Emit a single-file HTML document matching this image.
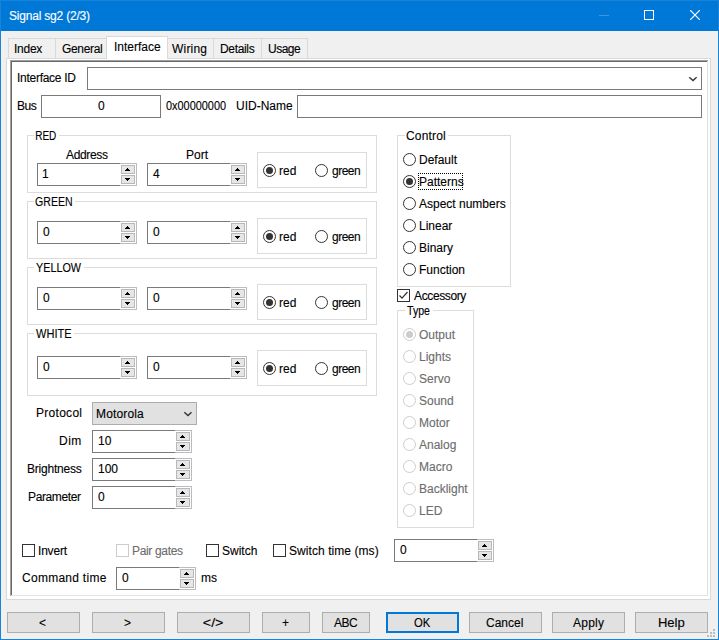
<!DOCTYPE html>
<html><head><meta charset="utf-8"><style>
html,body{margin:0;padding:0}
body{width:719px;height:640px;position:relative;overflow:hidden;background:#f0f0f0;font-family:'Liberation Sans', sans-serif;font-size:12px}
.a{position:absolute;box-sizing:border-box}
.t{line-height:14px;white-space:pre;-webkit-text-stroke:0.12px currentColor}
.btn{text-align:center;color:#000;white-space:pre}
</style></head><body>
<div class="a" style="left:0px;top:0px;width:719px;height:31px;background:#0078d7;"></div>
<div class="a" style="left:0px;top:0px;width:1px;height:640px;background:#1883d7;"></div>
<div class="a" style="left:718px;top:0px;width:1px;height:640px;background:#1883d7;"></div>
<div class="a" style="left:0px;top:639px;width:719px;height:1px;background:#1883d7;"></div>
<div class="a" style="left:0px;top:0px;width:719px;height:1px;background:#1883d7;"></div>
<div class="a" style="left:599px;top:15px;width:10px;height:1px;background:#3f95de;"></div>
<svg class="a" style="left:644px;top:10px" width="10" height="10"><rect x="0.5" y="0.5" width="9" height="9" fill="none" stroke="#fff" stroke-width="1"/></svg>
<svg class="a" style="left:690px;top:10px" width="10" height="10"><path d="M0 0 L10 10 M10 0 L0 10" stroke="#fff" stroke-width="1.2" fill="none"/></svg>
<div class="a" style="left:6px;top:58px;width:705px;height:542px;background:#fff;box-shadow:inset 0 0 0 1px #d9d9d9;"></div>
<div class="a" style="left:8px;top:38px;width:48px;height:21px;background:#f0f0f0;box-shadow:inset 0 0 0 1px #d9d9d9;"></div>
<div class="a" style="left:55px;top:38px;width:52px;height:21px;background:#f0f0f0;box-shadow:inset 0 0 0 1px #d9d9d9;"></div>
<div class="a" style="left:167px;top:38px;width:47px;height:21px;background:#f0f0f0;box-shadow:inset 0 0 0 1px #d9d9d9;"></div>
<div class="a" style="left:213px;top:38px;width:49px;height:21px;background:#f0f0f0;box-shadow:inset 0 0 0 1px #d9d9d9;"></div>
<div class="a" style="left:261px;top:38px;width:47px;height:21px;background:#f0f0f0;box-shadow:inset 0 0 0 1px #d9d9d9;"></div>
<div class="a" style="left:106px;top:36px;width:62px;height:23px;background:#fff;box-shadow:inset 0 0 0 1px #d9d9d9;"></div>
<div class="a" style="left:107px;top:58px;width:60px;height:1px;background:#fff;"></div>
<div class="a" style="left:10px;top:60px;width:699px;height:537px;background:#fff;"></div>
<div class="a" style="left:10px;top:60px;width:698px;height:1px;background:#a0a0a0;"></div>
<div class="a" style="left:10px;top:60px;width:1px;height:536px;background:#a0a0a0;"></div>
<div class="a" style="left:11px;top:61px;width:696px;height:1px;background:#696969;"></div>
<div class="a" style="left:11px;top:61px;width:1px;height:534px;background:#696969;"></div>
<div class="a" style="left:11px;top:595px;width:697px;height:1px;background:#e3e3e3;"></div>
<div class="a" style="left:707px;top:61px;width:1px;height:535px;background:#e3e3e3;"></div>
<div class="a" style="left:10px;top:596px;width:699px;height:1px;background:#ffffff;"></div>
<div class="a" style="left:708px;top:60px;width:1px;height:537px;background:#ffffff;"></div>
<div class="a" style="left:87px;top:67px;width:615px;height:23px;background:#fff;box-shadow:inset 0 0 0 1px #7a7a7a;"></div>
<svg class="a" style="left:686px;top:74px" width="14" height="10"><path d="M3.25 3.2 L7 6.5 L10.6 3.2" stroke="#333" stroke-width="1.35" fill="none"/></svg>
<div class="a" style="left:41px;top:95px;width:120px;height:23px;background:#fff;box-shadow:inset 0 0 0 1px #7a7a7a;"></div>
<div class="a" style="left:297px;top:95px;width:405px;height:23px;background:#fff;box-shadow:inset 0 0 0 1px #7a7a7a;"></div>
<div class="a" style="left:27px;top:135px;width:1px;height:58px;background:#dcdcdc;"></div>
<div class="a" style="left:376px;top:135px;width:1px;height:58px;background:#dcdcdc;"></div>
<div class="a" style="left:27px;top:192px;width:350px;height:1px;background:#dcdcdc;"></div>
<div class="a" style="left:27px;top:135px;width:7px;height:1px;background:#dcdcdc;"></div>
<div class="a" style="left:59px;top:135px;width:318px;height:1px;background:#dcdcdc;"></div>
<div class="a" style="left:37px;top:163px;width:84px;height:23px;background:#fff;box-shadow:inset 0 0 0 1px #7a7a7a;"></div>
<div class="a" style="left:120px;top:163px;width:17px;height:23px;background:#fff;box-shadow:inset 0 1px 0 #b9bcc1, inset -1px 0 0 #b9bcc1, inset 0 -1px 0 #b9bcc1;"></div>
<div class="a" style="left:121px;top:165px;width:14px;height:9px;background:#e6e6e6;box-shadow:inset 0 0 0 1px #b8b8b8;"></div>
<div class="a" style="left:121px;top:175px;width:14px;height:9px;background:#e6e6e6;box-shadow:inset 0 0 0 1px #b8b8b8;"></div>
<div class="a" style="left:127px;top:168px;width:1px;height:1px;background:#000;"></div>
<div class="a" style="left:127px;top:180px;width:1px;height:1px;background:#000;"></div>
<div class="a" style="left:126px;top:169px;width:3px;height:1px;background:#000;"></div>
<div class="a" style="left:126px;top:179px;width:3px;height:1px;background:#000;"></div>
<div class="a" style="left:125px;top:170px;width:5px;height:1px;background:#000;"></div>
<div class="a" style="left:125px;top:178px;width:5px;height:1px;background:#000;"></div>
<div class="a" style="left:147px;top:163px;width:84px;height:23px;background:#fff;box-shadow:inset 0 0 0 1px #7a7a7a;"></div>
<div class="a" style="left:230px;top:163px;width:17px;height:23px;background:#fff;box-shadow:inset 0 1px 0 #b9bcc1, inset -1px 0 0 #b9bcc1, inset 0 -1px 0 #b9bcc1;"></div>
<div class="a" style="left:231px;top:165px;width:14px;height:9px;background:#e6e6e6;box-shadow:inset 0 0 0 1px #b8b8b8;"></div>
<div class="a" style="left:231px;top:175px;width:14px;height:9px;background:#e6e6e6;box-shadow:inset 0 0 0 1px #b8b8b8;"></div>
<div class="a" style="left:237px;top:168px;width:1px;height:1px;background:#000;"></div>
<div class="a" style="left:237px;top:180px;width:1px;height:1px;background:#000;"></div>
<div class="a" style="left:236px;top:169px;width:3px;height:1px;background:#000;"></div>
<div class="a" style="left:236px;top:179px;width:3px;height:1px;background:#000;"></div>
<div class="a" style="left:235px;top:170px;width:5px;height:1px;background:#000;"></div>
<div class="a" style="left:235px;top:178px;width:5px;height:1px;background:#000;"></div>
<div class="a" style="left:257px;top:152px;width:110px;height:36px;box-shadow:inset 0 0 0 1px #dcdcdc;"></div>
<svg class="a" style="left:263px;top:164px" width="13" height="13"><circle cx="6.5" cy="6.5" r="6" fill="#fff" stroke="#333333" stroke-width="1"/><circle cx="6.5" cy="6.5" r="3.5" fill="#333333"/></svg>
<svg class="a" style="left:315px;top:164px" width="13" height="13"><circle cx="6.5" cy="6.5" r="6" fill="#fff" stroke="#333333" stroke-width="1"/></svg>
<div class="a" style="left:27px;top:201px;width:1px;height:58px;background:#dcdcdc;"></div>
<div class="a" style="left:376px;top:201px;width:1px;height:58px;background:#dcdcdc;"></div>
<div class="a" style="left:27px;top:258px;width:350px;height:1px;background:#dcdcdc;"></div>
<div class="a" style="left:27px;top:201px;width:7px;height:1px;background:#dcdcdc;"></div>
<div class="a" style="left:75px;top:201px;width:302px;height:1px;background:#dcdcdc;"></div>
<div class="a" style="left:37px;top:221px;width:84px;height:23px;background:#fff;box-shadow:inset 0 0 0 1px #7a7a7a;"></div>
<div class="a" style="left:120px;top:221px;width:17px;height:23px;background:#fff;box-shadow:inset 0 1px 0 #b9bcc1, inset -1px 0 0 #b9bcc1, inset 0 -1px 0 #b9bcc1;"></div>
<div class="a" style="left:121px;top:223px;width:14px;height:9px;background:#e6e6e6;box-shadow:inset 0 0 0 1px #b8b8b8;"></div>
<div class="a" style="left:121px;top:233px;width:14px;height:9px;background:#e6e6e6;box-shadow:inset 0 0 0 1px #b8b8b8;"></div>
<div class="a" style="left:127px;top:226px;width:1px;height:1px;background:#000;"></div>
<div class="a" style="left:127px;top:238px;width:1px;height:1px;background:#000;"></div>
<div class="a" style="left:126px;top:227px;width:3px;height:1px;background:#000;"></div>
<div class="a" style="left:126px;top:237px;width:3px;height:1px;background:#000;"></div>
<div class="a" style="left:125px;top:228px;width:5px;height:1px;background:#000;"></div>
<div class="a" style="left:125px;top:236px;width:5px;height:1px;background:#000;"></div>
<div class="a" style="left:147px;top:221px;width:84px;height:23px;background:#fff;box-shadow:inset 0 0 0 1px #7a7a7a;"></div>
<div class="a" style="left:230px;top:221px;width:17px;height:23px;background:#fff;box-shadow:inset 0 1px 0 #b9bcc1, inset -1px 0 0 #b9bcc1, inset 0 -1px 0 #b9bcc1;"></div>
<div class="a" style="left:231px;top:223px;width:14px;height:9px;background:#e6e6e6;box-shadow:inset 0 0 0 1px #b8b8b8;"></div>
<div class="a" style="left:231px;top:233px;width:14px;height:9px;background:#e6e6e6;box-shadow:inset 0 0 0 1px #b8b8b8;"></div>
<div class="a" style="left:237px;top:226px;width:1px;height:1px;background:#000;"></div>
<div class="a" style="left:237px;top:238px;width:1px;height:1px;background:#000;"></div>
<div class="a" style="left:236px;top:227px;width:3px;height:1px;background:#000;"></div>
<div class="a" style="left:236px;top:237px;width:3px;height:1px;background:#000;"></div>
<div class="a" style="left:235px;top:228px;width:5px;height:1px;background:#000;"></div>
<div class="a" style="left:235px;top:236px;width:5px;height:1px;background:#000;"></div>
<div class="a" style="left:257px;top:218px;width:110px;height:36px;box-shadow:inset 0 0 0 1px #dcdcdc;"></div>
<svg class="a" style="left:263px;top:230px" width="13" height="13"><circle cx="6.5" cy="6.5" r="6" fill="#fff" stroke="#333333" stroke-width="1"/><circle cx="6.5" cy="6.5" r="3.5" fill="#333333"/></svg>
<svg class="a" style="left:315px;top:230px" width="13" height="13"><circle cx="6.5" cy="6.5" r="6" fill="#fff" stroke="#333333" stroke-width="1"/></svg>
<div class="a" style="left:27px;top:267px;width:1px;height:58px;background:#dcdcdc;"></div>
<div class="a" style="left:376px;top:267px;width:1px;height:58px;background:#dcdcdc;"></div>
<div class="a" style="left:27px;top:324px;width:350px;height:1px;background:#dcdcdc;"></div>
<div class="a" style="left:27px;top:267px;width:7px;height:1px;background:#dcdcdc;"></div>
<div class="a" style="left:84px;top:267px;width:293px;height:1px;background:#dcdcdc;"></div>
<div class="a" style="left:37px;top:287px;width:84px;height:23px;background:#fff;box-shadow:inset 0 0 0 1px #7a7a7a;"></div>
<div class="a" style="left:120px;top:287px;width:17px;height:23px;background:#fff;box-shadow:inset 0 1px 0 #b9bcc1, inset -1px 0 0 #b9bcc1, inset 0 -1px 0 #b9bcc1;"></div>
<div class="a" style="left:121px;top:289px;width:14px;height:9px;background:#e6e6e6;box-shadow:inset 0 0 0 1px #b8b8b8;"></div>
<div class="a" style="left:121px;top:299px;width:14px;height:9px;background:#e6e6e6;box-shadow:inset 0 0 0 1px #b8b8b8;"></div>
<div class="a" style="left:127px;top:292px;width:1px;height:1px;background:#000;"></div>
<div class="a" style="left:127px;top:304px;width:1px;height:1px;background:#000;"></div>
<div class="a" style="left:126px;top:293px;width:3px;height:1px;background:#000;"></div>
<div class="a" style="left:126px;top:303px;width:3px;height:1px;background:#000;"></div>
<div class="a" style="left:125px;top:294px;width:5px;height:1px;background:#000;"></div>
<div class="a" style="left:125px;top:302px;width:5px;height:1px;background:#000;"></div>
<div class="a" style="left:147px;top:287px;width:84px;height:23px;background:#fff;box-shadow:inset 0 0 0 1px #7a7a7a;"></div>
<div class="a" style="left:230px;top:287px;width:17px;height:23px;background:#fff;box-shadow:inset 0 1px 0 #b9bcc1, inset -1px 0 0 #b9bcc1, inset 0 -1px 0 #b9bcc1;"></div>
<div class="a" style="left:231px;top:289px;width:14px;height:9px;background:#e6e6e6;box-shadow:inset 0 0 0 1px #b8b8b8;"></div>
<div class="a" style="left:231px;top:299px;width:14px;height:9px;background:#e6e6e6;box-shadow:inset 0 0 0 1px #b8b8b8;"></div>
<div class="a" style="left:237px;top:292px;width:1px;height:1px;background:#000;"></div>
<div class="a" style="left:237px;top:304px;width:1px;height:1px;background:#000;"></div>
<div class="a" style="left:236px;top:293px;width:3px;height:1px;background:#000;"></div>
<div class="a" style="left:236px;top:303px;width:3px;height:1px;background:#000;"></div>
<div class="a" style="left:235px;top:294px;width:5px;height:1px;background:#000;"></div>
<div class="a" style="left:235px;top:302px;width:5px;height:1px;background:#000;"></div>
<div class="a" style="left:257px;top:284px;width:110px;height:36px;box-shadow:inset 0 0 0 1px #dcdcdc;"></div>
<svg class="a" style="left:263px;top:296px" width="13" height="13"><circle cx="6.5" cy="6.5" r="6" fill="#fff" stroke="#333333" stroke-width="1"/><circle cx="6.5" cy="6.5" r="3.5" fill="#333333"/></svg>
<svg class="a" style="left:315px;top:296px" width="13" height="13"><circle cx="6.5" cy="6.5" r="6" fill="#fff" stroke="#333333" stroke-width="1"/></svg>
<div class="a" style="left:27px;top:333px;width:1px;height:63px;background:#dcdcdc;"></div>
<div class="a" style="left:376px;top:333px;width:1px;height:63px;background:#dcdcdc;"></div>
<div class="a" style="left:27px;top:395px;width:350px;height:1px;background:#dcdcdc;"></div>
<div class="a" style="left:27px;top:333px;width:7px;height:1px;background:#dcdcdc;"></div>
<div class="a" style="left:74px;top:333px;width:303px;height:1px;background:#dcdcdc;"></div>
<div class="a" style="left:37px;top:356px;width:84px;height:23px;background:#fff;box-shadow:inset 0 0 0 1px #7a7a7a;"></div>
<div class="a" style="left:120px;top:356px;width:17px;height:23px;background:#fff;box-shadow:inset 0 1px 0 #b9bcc1, inset -1px 0 0 #b9bcc1, inset 0 -1px 0 #b9bcc1;"></div>
<div class="a" style="left:121px;top:358px;width:14px;height:9px;background:#e6e6e6;box-shadow:inset 0 0 0 1px #b8b8b8;"></div>
<div class="a" style="left:121px;top:368px;width:14px;height:9px;background:#e6e6e6;box-shadow:inset 0 0 0 1px #b8b8b8;"></div>
<div class="a" style="left:127px;top:361px;width:1px;height:1px;background:#000;"></div>
<div class="a" style="left:127px;top:373px;width:1px;height:1px;background:#000;"></div>
<div class="a" style="left:126px;top:362px;width:3px;height:1px;background:#000;"></div>
<div class="a" style="left:126px;top:372px;width:3px;height:1px;background:#000;"></div>
<div class="a" style="left:125px;top:363px;width:5px;height:1px;background:#000;"></div>
<div class="a" style="left:125px;top:371px;width:5px;height:1px;background:#000;"></div>
<div class="a" style="left:147px;top:356px;width:84px;height:23px;background:#fff;box-shadow:inset 0 0 0 1px #7a7a7a;"></div>
<div class="a" style="left:230px;top:356px;width:17px;height:23px;background:#fff;box-shadow:inset 0 1px 0 #b9bcc1, inset -1px 0 0 #b9bcc1, inset 0 -1px 0 #b9bcc1;"></div>
<div class="a" style="left:231px;top:358px;width:14px;height:9px;background:#e6e6e6;box-shadow:inset 0 0 0 1px #b8b8b8;"></div>
<div class="a" style="left:231px;top:368px;width:14px;height:9px;background:#e6e6e6;box-shadow:inset 0 0 0 1px #b8b8b8;"></div>
<div class="a" style="left:237px;top:361px;width:1px;height:1px;background:#000;"></div>
<div class="a" style="left:237px;top:373px;width:1px;height:1px;background:#000;"></div>
<div class="a" style="left:236px;top:362px;width:3px;height:1px;background:#000;"></div>
<div class="a" style="left:236px;top:372px;width:3px;height:1px;background:#000;"></div>
<div class="a" style="left:235px;top:363px;width:5px;height:1px;background:#000;"></div>
<div class="a" style="left:235px;top:371px;width:5px;height:1px;background:#000;"></div>
<div class="a" style="left:257px;top:350px;width:110px;height:36px;box-shadow:inset 0 0 0 1px #dcdcdc;"></div>
<svg class="a" style="left:263px;top:362px" width="13" height="13"><circle cx="6.5" cy="6.5" r="6" fill="#fff" stroke="#333333" stroke-width="1"/><circle cx="6.5" cy="6.5" r="3.5" fill="#333333"/></svg>
<svg class="a" style="left:315px;top:362px" width="13" height="13"><circle cx="6.5" cy="6.5" r="6" fill="#fff" stroke="#333333" stroke-width="1"/></svg>
<div class="a" style="left:397px;top:135px;width:1px;height:152px;background:#dcdcdc;"></div>
<div class="a" style="left:510px;top:135px;width:1px;height:152px;background:#dcdcdc;"></div>
<div class="a" style="left:397px;top:286px;width:114px;height:1px;background:#dcdcdc;"></div>
<div class="a" style="left:397px;top:135px;width:8px;height:1px;background:#dcdcdc;"></div>
<div class="a" style="left:448px;top:135px;width:63px;height:1px;background:#dcdcdc;"></div>
<svg class="a" style="left:403px;top:153px" width="13" height="13"><circle cx="6.5" cy="6.5" r="6" fill="#fff" stroke="#333333" stroke-width="1"/></svg>
<svg class="a" style="left:403px;top:175px" width="13" height="13"><circle cx="6.5" cy="6.5" r="6" fill="#fff" stroke="#333333" stroke-width="1"/><circle cx="6.5" cy="6.5" r="3.5" fill="#333333"/></svg>
<svg class="a" style="left:403px;top:197px" width="13" height="13"><circle cx="6.5" cy="6.5" r="6" fill="#fff" stroke="#333333" stroke-width="1"/></svg>
<svg class="a" style="left:403px;top:219px" width="13" height="13"><circle cx="6.5" cy="6.5" r="6" fill="#fff" stroke="#333333" stroke-width="1"/></svg>
<svg class="a" style="left:403px;top:241px" width="13" height="13"><circle cx="6.5" cy="6.5" r="6" fill="#fff" stroke="#333333" stroke-width="1"/></svg>
<svg class="a" style="left:403px;top:263px" width="13" height="13"><circle cx="6.5" cy="6.5" r="6" fill="#fff" stroke="#333333" stroke-width="1"/></svg>
<div class="a" style="left:418px;top:173px;width:45px;height:17px;box-shadow:inset 0 0 0 1px transparent;outline:1px dotted #000;outline-offset:-1px;"></div>
<div class="a" style="left:397px;top:289px;width:13px;height:13px;background:#fff;box-shadow:inset 0 0 0 1px #333333;"></div>
<svg class="a" style="left:397px;top:289px" width="13" height="13"><path d="M2.5 6.5 L5 9.2 L10.5 3" stroke="#333" stroke-width="1.2" fill="none"/></svg>
<div class="a" style="left:397px;top:310px;width:1px;height:218px;background:#dcdcdc;"></div>
<div class="a" style="left:473px;top:310px;width:1px;height:218px;background:#dcdcdc;"></div>
<div class="a" style="left:397px;top:527px;width:77px;height:1px;background:#dcdcdc;"></div>
<div class="a" style="left:397px;top:310px;width:8px;height:1px;background:#dcdcdc;"></div>
<div class="a" style="left:433px;top:310px;width:41px;height:1px;background:#dcdcdc;"></div>
<svg class="a" style="left:403px;top:328px" width="13" height="13"><circle cx="6.5" cy="6.5" r="6" fill="#fff" stroke="#cccccc" stroke-width="1"/><circle cx="6.5" cy="6.5" r="3.5" fill="#cccccc"/></svg>
<svg class="a" style="left:403px;top:350px" width="13" height="13"><circle cx="6.5" cy="6.5" r="6" fill="#fff" stroke="#cccccc" stroke-width="1"/></svg>
<svg class="a" style="left:403px;top:372px" width="13" height="13"><circle cx="6.5" cy="6.5" r="6" fill="#fff" stroke="#cccccc" stroke-width="1"/></svg>
<svg class="a" style="left:403px;top:394px" width="13" height="13"><circle cx="6.5" cy="6.5" r="6" fill="#fff" stroke="#cccccc" stroke-width="1"/></svg>
<svg class="a" style="left:403px;top:416px" width="13" height="13"><circle cx="6.5" cy="6.5" r="6" fill="#fff" stroke="#cccccc" stroke-width="1"/></svg>
<svg class="a" style="left:403px;top:438px" width="13" height="13"><circle cx="6.5" cy="6.5" r="6" fill="#fff" stroke="#cccccc" stroke-width="1"/></svg>
<svg class="a" style="left:403px;top:460px" width="13" height="13"><circle cx="6.5" cy="6.5" r="6" fill="#fff" stroke="#cccccc" stroke-width="1"/></svg>
<svg class="a" style="left:403px;top:482px" width="13" height="13"><circle cx="6.5" cy="6.5" r="6" fill="#fff" stroke="#cccccc" stroke-width="1"/></svg>
<svg class="a" style="left:403px;top:504px" width="13" height="13"><circle cx="6.5" cy="6.5" r="6" fill="#fff" stroke="#cccccc" stroke-width="1"/></svg>
<div class="a" style="left:92px;top:402px;width:105px;height:23px;background:#e1e1e1;box-shadow:inset 0 0 0 1px #adadad;"></div>
<svg class="a" style="left:181px;top:409px" width="14" height="10"><path d="M3.3 3.3 L7 6.5 L10.5 3.3" stroke="#333" stroke-width="1.35" fill="none"/></svg>
<div class="a" style="left:92px;top:430px;width:84px;height:23px;background:#fff;box-shadow:inset 0 0 0 1px #7a7a7a;"></div>
<div class="a" style="left:175px;top:430px;width:17px;height:23px;background:#fff;box-shadow:inset 0 1px 0 #b9bcc1, inset -1px 0 0 #b9bcc1, inset 0 -1px 0 #b9bcc1;"></div>
<div class="a" style="left:176px;top:432px;width:14px;height:9px;background:#e6e6e6;box-shadow:inset 0 0 0 1px #b8b8b8;"></div>
<div class="a" style="left:176px;top:442px;width:14px;height:9px;background:#e6e6e6;box-shadow:inset 0 0 0 1px #b8b8b8;"></div>
<div class="a" style="left:182px;top:435px;width:1px;height:1px;background:#000;"></div>
<div class="a" style="left:182px;top:447px;width:1px;height:1px;background:#000;"></div>
<div class="a" style="left:181px;top:436px;width:3px;height:1px;background:#000;"></div>
<div class="a" style="left:181px;top:446px;width:3px;height:1px;background:#000;"></div>
<div class="a" style="left:180px;top:437px;width:5px;height:1px;background:#000;"></div>
<div class="a" style="left:180px;top:445px;width:5px;height:1px;background:#000;"></div>
<div class="a" style="left:92px;top:458px;width:84px;height:23px;background:#fff;box-shadow:inset 0 0 0 1px #7a7a7a;"></div>
<div class="a" style="left:175px;top:458px;width:17px;height:23px;background:#fff;box-shadow:inset 0 1px 0 #b9bcc1, inset -1px 0 0 #b9bcc1, inset 0 -1px 0 #b9bcc1;"></div>
<div class="a" style="left:176px;top:460px;width:14px;height:9px;background:#e6e6e6;box-shadow:inset 0 0 0 1px #b8b8b8;"></div>
<div class="a" style="left:176px;top:470px;width:14px;height:9px;background:#e6e6e6;box-shadow:inset 0 0 0 1px #b8b8b8;"></div>
<div class="a" style="left:182px;top:463px;width:1px;height:1px;background:#000;"></div>
<div class="a" style="left:182px;top:475px;width:1px;height:1px;background:#000;"></div>
<div class="a" style="left:181px;top:464px;width:3px;height:1px;background:#000;"></div>
<div class="a" style="left:181px;top:474px;width:3px;height:1px;background:#000;"></div>
<div class="a" style="left:180px;top:465px;width:5px;height:1px;background:#000;"></div>
<div class="a" style="left:180px;top:473px;width:5px;height:1px;background:#000;"></div>
<div class="a" style="left:92px;top:486px;width:84px;height:23px;background:#fff;box-shadow:inset 0 0 0 1px #7a7a7a;"></div>
<div class="a" style="left:175px;top:486px;width:17px;height:23px;background:#fff;box-shadow:inset 0 1px 0 #b9bcc1, inset -1px 0 0 #b9bcc1, inset 0 -1px 0 #b9bcc1;"></div>
<div class="a" style="left:176px;top:488px;width:14px;height:9px;background:#e6e6e6;box-shadow:inset 0 0 0 1px #b8b8b8;"></div>
<div class="a" style="left:176px;top:498px;width:14px;height:9px;background:#e6e6e6;box-shadow:inset 0 0 0 1px #b8b8b8;"></div>
<div class="a" style="left:182px;top:491px;width:1px;height:1px;background:#000;"></div>
<div class="a" style="left:182px;top:503px;width:1px;height:1px;background:#000;"></div>
<div class="a" style="left:181px;top:492px;width:3px;height:1px;background:#000;"></div>
<div class="a" style="left:181px;top:502px;width:3px;height:1px;background:#000;"></div>
<div class="a" style="left:180px;top:493px;width:5px;height:1px;background:#000;"></div>
<div class="a" style="left:180px;top:501px;width:5px;height:1px;background:#000;"></div>
<div class="a" style="left:22px;top:544px;width:13px;height:13px;background:#fff;box-shadow:inset 0 0 0 1px #333333;"></div>
<div class="a" style="left:116px;top:544px;width:13px;height:13px;background:#fff;box-shadow:inset 0 0 0 1px #cccccc;"></div>
<div class="a" style="left:206px;top:544px;width:13px;height:13px;background:#fff;box-shadow:inset 0 0 0 1px #333333;"></div>
<div class="a" style="left:273px;top:544px;width:13px;height:13px;background:#fff;box-shadow:inset 0 0 0 1px #333333;"></div>
<div class="a" style="left:394px;top:539px;width:84px;height:23px;background:#fff;box-shadow:inset 0 0 0 1px #7a7a7a;"></div>
<div class="a" style="left:477px;top:539px;width:17px;height:23px;background:#fff;box-shadow:inset 0 1px 0 #b9bcc1, inset -1px 0 0 #b9bcc1, inset 0 -1px 0 #b9bcc1;"></div>
<div class="a" style="left:478px;top:541px;width:14px;height:9px;background:#e6e6e6;box-shadow:inset 0 0 0 1px #b8b8b8;"></div>
<div class="a" style="left:478px;top:551px;width:14px;height:9px;background:#e6e6e6;box-shadow:inset 0 0 0 1px #b8b8b8;"></div>
<div class="a" style="left:484px;top:544px;width:1px;height:1px;background:#000;"></div>
<div class="a" style="left:484px;top:556px;width:1px;height:1px;background:#000;"></div>
<div class="a" style="left:483px;top:545px;width:3px;height:1px;background:#000;"></div>
<div class="a" style="left:483px;top:555px;width:3px;height:1px;background:#000;"></div>
<div class="a" style="left:482px;top:546px;width:5px;height:1px;background:#000;"></div>
<div class="a" style="left:482px;top:554px;width:5px;height:1px;background:#000;"></div>
<div class="a" style="left:116px;top:567px;width:64px;height:23px;background:#fff;box-shadow:inset 0 0 0 1px #7a7a7a;"></div>
<div class="a" style="left:179px;top:567px;width:17px;height:23px;background:#fff;box-shadow:inset 0 1px 0 #b9bcc1, inset -1px 0 0 #b9bcc1, inset 0 -1px 0 #b9bcc1;"></div>
<div class="a" style="left:180px;top:569px;width:14px;height:9px;background:#e6e6e6;box-shadow:inset 0 0 0 1px #b8b8b8;"></div>
<div class="a" style="left:180px;top:579px;width:14px;height:9px;background:#e6e6e6;box-shadow:inset 0 0 0 1px #b8b8b8;"></div>
<div class="a" style="left:186px;top:572px;width:1px;height:1px;background:#000;"></div>
<div class="a" style="left:186px;top:584px;width:1px;height:1px;background:#000;"></div>
<div class="a" style="left:185px;top:573px;width:3px;height:1px;background:#000;"></div>
<div class="a" style="left:185px;top:583px;width:3px;height:1px;background:#000;"></div>
<div class="a" style="left:184px;top:574px;width:5px;height:1px;background:#000;"></div>
<div class="a" style="left:184px;top:582px;width:5px;height:1px;background:#000;"></div>
<div class="a" style="left:7px;top:612px;width:73px;height:21px;background:#e1e1e1;box-shadow:inset 0 0 0 1px #adadad;"></div>
<div class="a" style="left:92px;top:612px;width:73px;height:21px;background:#e1e1e1;box-shadow:inset 0 0 0 1px #adadad;"></div>
<div class="a" style="left:177px;top:612px;width:73px;height:21px;background:#e1e1e1;box-shadow:inset 0 0 0 1px #adadad;"></div>
<div class="a" style="left:262px;top:612px;width:48px;height:21px;background:#e1e1e1;box-shadow:inset 0 0 0 1px #adadad;"></div>
<div class="a" style="left:322px;top:612px;width:48px;height:21px;background:#e1e1e1;box-shadow:inset 0 0 0 1px #adadad;"></div>
<div class="a" style="left:386px;top:612px;width:73px;height:21px;background:#e1e1e1;box-shadow:inset 0 0 0 2px #0078d7;"></div>
<div class="a" style="left:469px;top:612px;width:73px;height:21px;background:#e1e1e1;box-shadow:inset 0 0 0 1px #adadad;"></div>
<div class="a" style="left:552px;top:612px;width:73px;height:21px;background:#e1e1e1;box-shadow:inset 0 0 0 1px #adadad;"></div>
<div class="a" style="left:635px;top:612px;width:73px;height:21px;background:#e1e1e1;box-shadow:inset 0 0 0 1px #adadad;"></div>
<div class="a" style="left:713px;top:629px;width:2px;height:2px;background:#bcbcbc;"></div>
<div class="a" style="left:713px;top:632px;width:2px;height:2px;background:#bcbcbc;"></div>
<div class="a" style="left:710px;top:632px;width:2px;height:2px;background:#bcbcbc;"></div>
<div class="a" style="left:713px;top:635px;width:2px;height:2px;background:#bcbcbc;"></div>
<div class="a" style="left:710px;top:635px;width:2px;height:2px;background:#bcbcbc;"></div>
<div class="a" style="left:707px;top:635px;width:2px;height:2px;background:#bcbcbc;"></div>
<div class="a t" style="left:9px;top:9px;color:#fff;letter-spacing:-0.200px;">Signal sg2 (2/3)</div>
<div class="a t" style="left:14px;top:42px;color:#000;letter-spacing:-0.250px;">Index</div>
<div class="a t" style="left:62px;top:42px;color:#000;letter-spacing:-0.333px;">General</div>
<div class="a t" style="left:114px;top:40px;color:#000;letter-spacing:0.000px;">Interface</div>
<div class="a t" style="left:172px;top:42px;color:#000;letter-spacing:0.200px;">Wiring</div>
<div class="a t" style="left:220px;top:42px;color:#000;letter-spacing:-0.333px;">Details</div>
<div class="a t" style="left:268px;top:42px;color:#000;letter-spacing:-0.500px;">Usage</div>
<div class="a t" style="left:17px;top:71px;color:#000;letter-spacing:-0.273px;">Interface ID</div>
<div class="a t" style="left:17px;top:99px;color:#000;letter-spacing:-0.500px;">Bus</div>
<div class="a t" style="left:98px;top:99px;color:#000;letter-spacing:0.000px;">0</div>
<div class="a t" style="left:166px;top:99px;color:#000;transform:scaleX(0.9091);transform-origin:0px 0;">0x00000000</div>
<div class="a t" style="left:236px;top:99px;color:#000;letter-spacing:0.000px;">UID-Name</div>
<div class="a t" style="left:35px;top:129px;color:#000;transform:scaleX(0.8333);transform-origin:1px 0;">RED</div>
<div class="a t" style="left:42px;top:167px;color:#000;letter-spacing:0.000px;">1</div>
<div class="a t" style="left:153px;top:167px;color:#000;letter-spacing:0.000px;">4</div>
<div class="a t" style="left:279px;top:164px;color:#000;letter-spacing:0.000px;">red</div>
<div class="a t" style="left:332px;top:164px;color:#000;letter-spacing:-0.500px;">green</div>
<div class="a t" style="left:35px;top:195px;color:#000;transform:scaleX(0.8780);transform-origin:1px 0;">GREEN</div>
<div class="a t" style="left:43px;top:225px;color:#000;letter-spacing:0.000px;">0</div>
<div class="a t" style="left:153px;top:225px;color:#000;letter-spacing:0.000px;">0</div>
<div class="a t" style="left:279px;top:230px;color:#000;letter-spacing:0.000px;">red</div>
<div class="a t" style="left:332px;top:230px;color:#000;letter-spacing:-0.500px;">green</div>
<div class="a t" style="left:36px;top:261px;color:#000;transform:scaleX(0.9000);transform-origin:0px 0;">YELLOW</div>
<div class="a t" style="left:43px;top:291px;color:#000;letter-spacing:0.000px;">0</div>
<div class="a t" style="left:153px;top:291px;color:#000;letter-spacing:0.000px;">0</div>
<div class="a t" style="left:279px;top:296px;color:#000;letter-spacing:0.000px;">red</div>
<div class="a t" style="left:332px;top:296px;color:#000;letter-spacing:-0.500px;">green</div>
<div class="a t" style="left:36px;top:327px;color:#000;transform:scaleX(0.9211);transform-origin:0px 0;">WHITE</div>
<div class="a t" style="left:43px;top:360px;color:#000;letter-spacing:0.000px;">0</div>
<div class="a t" style="left:153px;top:360px;color:#000;letter-spacing:0.000px;">0</div>
<div class="a t" style="left:279px;top:362px;color:#000;letter-spacing:0.000px;">red</div>
<div class="a t" style="left:332px;top:362px;color:#000;letter-spacing:-0.500px;">green</div>
<div class="a t" style="left:66px;top:148px;color:#000;letter-spacing:-0.333px;">Address</div>
<div class="a t" style="left:186px;top:148px;color:#000;letter-spacing:0.000px;">Port</div>
<div class="a t" style="left:406px;top:129px;color:#000;letter-spacing:0.167px;">Control</div>
<div class="a t" style="left:419px;top:153px;color:#000;letter-spacing:0.000px;">Default</div>
<div class="a t" style="left:419px;top:175px;color:#000;letter-spacing:0.000px;">Patterns</div>
<div class="a t" style="left:419px;top:197px;color:#000;letter-spacing:0.000px;">Aspect numbers</div>
<div class="a t" style="left:419px;top:219px;color:#000;letter-spacing:0.000px;">Linear</div>
<div class="a t" style="left:419px;top:241px;color:#000;letter-spacing:0.000px;">Binary</div>
<div class="a t" style="left:419px;top:263px;color:#000;letter-spacing:0.000px;">Function</div>
<div class="a t" style="left:414px;top:289px;color:#000;letter-spacing:-0.375px;">Accessory</div>
<div class="a t" style="left:407px;top:304px;color:#000;transform:scaleX(0.8846);transform-origin:0px 0;">Type</div>
<div class="a t" style="left:419px;top:328px;color:#6d6d6d;letter-spacing:0.000px;">Output</div>
<div class="a t" style="left:419px;top:350px;color:#6d6d6d;letter-spacing:0.000px;">Lights</div>
<div class="a t" style="left:419px;top:372px;color:#6d6d6d;letter-spacing:0.000px;">Servo</div>
<div class="a t" style="left:419px;top:394px;color:#6d6d6d;letter-spacing:0.000px;">Sound</div>
<div class="a t" style="left:419px;top:416px;color:#6d6d6d;letter-spacing:0.000px;">Motor</div>
<div class="a t" style="left:419px;top:438px;color:#6d6d6d;letter-spacing:0.000px;">Analog</div>
<div class="a t" style="left:419px;top:460px;color:#6d6d6d;letter-spacing:0.000px;">Macro</div>
<div class="a t" style="left:419px;top:482px;color:#6d6d6d;letter-spacing:0.000px;">Backlight</div>
<div class="a t" style="left:419px;top:504px;color:#6d6d6d;letter-spacing:0.000px;">LED</div>
<div class="a t" style="left:36px;top:406px;color:#000;letter-spacing:0.286px;">Protocol</div>
<div class="a t" style="left:96px;top:407px;color:#000;letter-spacing:0.143px;">Motorola</div>
<div class="a t" style="left:59px;top:434px;color:#000;letter-spacing:0.500px;">Dim</div>
<div class="a t" style="left:98px;top:434px;color:#000;letter-spacing:0.000px;">10</div>
<div class="a t" style="left:27px;top:462px;color:#000;letter-spacing:-0.222px;">Brightness</div>
<div class="a t" style="left:98px;top:462px;color:#000;letter-spacing:0.000px;">100</div>
<div class="a t" style="left:28px;top:490px;color:#000;letter-spacing:-0.375px;">Parameter</div>
<div class="a t" style="left:98px;top:490px;color:#000;letter-spacing:0.000px;">0</div>
<div class="a t" style="left:38px;top:544px;color:#000;letter-spacing:-0.200px;">Invert</div>
<div class="a t" style="left:132px;top:544px;color:#6d6d6d;letter-spacing:-0.333px;">Pair gates</div>
<div class="a t" style="left:222px;top:544px;color:#000;letter-spacing:0.000px;">Switch</div>
<div class="a t" style="left:289px;top:544px;color:#000;letter-spacing:0.067px;">Switch time (ms)</div>
<div class="a t" style="left:400px;top:543px;color:#000;letter-spacing:0.000px;">0</div>
<div class="a t" style="left:22px;top:571px;color:#000;letter-spacing:0.273px;">Command time</div>
<div class="a t" style="left:122px;top:571px;color:#000;letter-spacing:0.000px;">0</div>
<div class="a t" style="left:201px;top:571px;color:#000;letter-spacing:0.000px;">ms</div>
<div class="a t" style="left:39px;top:616px;color:#000;letter-spacing:0.000px;">&lt;</div>
<div class="a t" style="left:124px;top:616px;color:#000;letter-spacing:0.000px;">&gt;</div>
<div class="a t" style="left:203px;top:616px;color:#000;transform:scaleX(1.1875);transform-origin:1px 0;">&lt;/&gt;</div>
<div class="a t" style="left:282px;top:616px;color:#000;letter-spacing:0.000px;">+</div>
<div class="a t" style="left:334px;top:616px;color:#000;letter-spacing:-0.500px;">ABC</div>
<div class="a t" style="left:414px;top:616px;color:#000;transform:scaleX(0.9412);transform-origin:0px 0;">OK</div>
<div class="a t" style="left:486px;top:616px;color:#000;letter-spacing:0.000px;">Cancel</div>
<div class="a t" style="left:573px;top:616px;color:#000;letter-spacing:0.250px;">Apply</div>
<div class="a t" style="left:658px;top:616px;color:#000;transform:scaleX(1.0870);transform-origin:1px 0;">Help</div>
</body></html>
